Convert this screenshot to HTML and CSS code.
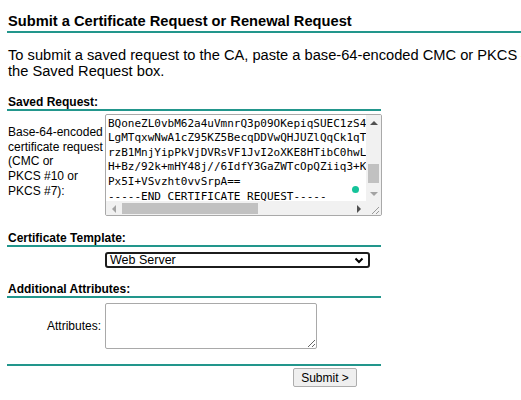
FILE: index.html
```
<!DOCTYPE html>
<html lang="en">
<head>
  <meta charset="UTF-8">
  <title>Microsoft Active Directory Certificate Services</title>
  <link rel="stylesheet" href="styles.css">
</head>
<body>
  <h1 class="title">Submit a Certificate Request or Renewal Request</h1>
  <p class="intro">To submit a saved request to the CA, paste a base-64-encoded CMC or PKCS #10 certificate request or PKCS #7 renewal request generated by an external source (such as a Web server) in<br>the Saved Request box.</p>

  <form class="req">
    <h2 class="section">Saved Request:</h2>
    <div class="row row-saved">
      <label class="lbl lbl-saved">Base-64-encoded<br>certificate request<br>(CMC or<br>PKCS #10 or<br>PKCS #7):</label>
      <div class="saved-box">
        <pre class="saved-text">Y2jBKc8n0Fq7xRzT1pWd4gUoLk9vHs3eXmNa6bQiGy5tJr2uCwEhVfZ8Do+Mlg==
BQoneZL0vbM62a4uVmnrQ3p09OKepiqSUEC1zS4tHqWm7Rk8Xa2Lb5JcVn0Pde
LgMTqxwNwA1cZ95KZ5BecqDDVwQHJUZlQqCk1qTg8sYr3Nf6Hu0Wb9EiOk2Mxa
rzB1MnjYipPkVjDVRsVF1JvI2oXKE8HTibC0hwL5nq7Gd3Ue9Ay4Rc1Zt6Qmsp
H+Bz/92k+mHY48j//6IdfY3GaZWTcOpQZiiq3+Ke2Lx7Vb0Nf5Sj8Dw1Pr4Tuo
Px5I+VSvzht0vvSrpA==
-----END CERTIFICATE REQUEST-----</pre>
        <div class="vbar">
          <div class="arrow"><span class="tri tri-up"></span></div>
          <div class="vtrack"><div class="vthumb"></div></div>
          <div class="arrow"><span class="tri tri-down"></span></div>
        </div>
        <div class="hbar">
          <div class="arrow"><span class="tri tri-left"></span></div>
          <div class="htrack"><div class="hthumb"></div></div>
          <div class="arrow"><span class="tri tri-right"></span></div>
        </div>
        <div class="corner">
          <svg width="15" height="15" viewBox="0 0 15 15">
            <line x1="13" y1="6" x2="6" y2="13" stroke="#9a9a9a" stroke-width="1"/>
            <line x1="13" y1="10" x2="10" y2="13" stroke="#9a9a9a" stroke-width="1"/>
          </svg>
        </div>
        <span class="grammar-dot"></span>
      </div>
    </div>

    <h2 class="section section-tpl">Certificate Template:</h2>
    <div class="row row-tpl">
      <span></span>
      <div class="select-box">
        <span>Web Server</span>
        <svg class="chev" width="10" height="7" viewBox="0 0 10 7">
          <polyline points="1.5,1.5 5,5 8.5,1.5" fill="none" stroke="#000" stroke-width="2"/>
        </svg>
      </div>
    </div>

    <h2 class="section section-attr">Additional Attributes:</h2>
    <div class="row row-attr">
      <label class="lbl lbl-attr" for="attrib">Attributes:</label>
      <textarea id="attrib" class="attr-box"></textarea>
    </div>

    <div class="rule"></div>
    <div class="submit-row">
      <button type="button" class="submit">Submit &gt;</button>
    </div>
  </form>
</body>
</html>
```

FILE: styles.css
```
html {
  overflow: hidden;
}
body {
  margin: 0;
  padding: 0 0 0 7px;
  font-family: "Liberation Sans", Arial, sans-serif;
  color: #000;
  background: #fff;
}
.title {
  margin: 13px 0 0;
  padding: 0 0 1px 1px;
  font-size: 14.67px;
  line-height: 17px;
  font-weight: bold;
  border-bottom: 2px solid #22968c;
}
.intro {
  margin: 14px 0 0 1px;
  font-size: 14.67px;
  line-height: 16px;
  white-space: nowrap;
}
.req {
  width: 374px;
  margin-top: 16px;
}
.section {
  margin: 0;
  padding-left: 1px;
  font-size: 12px;
  line-height: 14px;
  font-weight: bold;
  border-bottom: 2px solid #22968c;
}
.section-tpl {
  margin-top: 15px;
}
.section-attr {
  margin-top: 14px;
}
.row {
  display: grid;
  grid-template-columns: 98px auto;
}
.lbl {
  font-size: 12px;
}
.row-saved {
  margin-top: 3px;
}
.lbl-saved {
  padding: 11px 0 0 1px;
  line-height: 14.65px;
}
.saved-box {
  position: relative;
  width: 277px;
  height: 102px;
  box-sizing: border-box;
  border: 1px solid #a9a9a9;
  border-radius: 2px;
  display: grid;
  grid-template-columns: 260px 15px;
  grid-template-rows: 86px 15px;
  overflow: hidden;
}
.saved-text {
  grid-column: 1;
  grid-row: 1;
  margin: -13px 0 0;
  padding-left: 2px;
  font-family: "DejaVu Sans Mono", monospace;
  font-size: 11px;
  line-height: 14.6px;
  white-space: pre;
  overflow: hidden;
  height: 115px;
}
.vbar {
  grid-column: 2;
  grid-row: 1;
  background: #f1f1f1;
  display: flex;
  flex-direction: column;
}
.hbar {
  grid-column: 1;
  grid-row: 2;
  background: #f1f1f1;
  display: flex;
}
.corner {
  grid-column: 2;
  grid-row: 2;
  background: #f1f1f1;
}
.corner svg {
  display: block;
}
.arrow {
  width: 15px;
  height: 15px;
  display: flex;
  align-items: center;
  justify-content: center;
}
.tri {
  width: 0;
  height: 0;
}
.tri-up {
  border-left: 4px solid transparent;
  border-right: 4px solid transparent;
  border-bottom: 4px solid #505050;
}
.tri-down {
  border-left: 4px solid transparent;
  border-right: 4px solid transparent;
  border-top: 4px solid #a3a3a3;
}
.tri-left {
  border-top: 4px solid transparent;
  border-bottom: 4px solid transparent;
  border-right: 4px solid #a3a3a3;
}
.tri-right {
  border-top: 4px solid transparent;
  border-bottom: 4px solid transparent;
  border-left: 4px solid #505050;
}
.vtrack {
  flex: 1;
  padding: 34px 2px 0;
}
.vthumb {
  height: 19px;
  background: #c1c1c1;
}
.htrack {
  flex: 1;
  padding: 2px 0 0 1px;
}
.hthumb {
  width: 136px;
  height: 11px;
  background: #c1c1c1;
}
.grammar-dot {
  position: absolute;
  left: 246px;
  top: 71px;
  width: 7px;
  height: 7px;
  border-radius: 50%;
  background: #15c39a;
}
.row-tpl {
  margin-top: 5px;
}
.select-box {
  width: 265px;
  height: 16px;
  box-sizing: border-box;
  border: 2px solid #1c1c1c;
  border-radius: 3px;
  padding: 0 4px 0 3px;
  display: flex;
  align-items: center;
  justify-content: space-between;
  font-size: 12.5px;
}
.chev {
  display: block;
}
.row-attr {
  margin-top: 5px;
  align-items: center;
}
.lbl-attr {
  text-align: right;
  padding-right: 4px;
}
.attr-box {
  display: block;
  width: 212px;
  height: 46px;
  box-sizing: border-box;
  margin: 0;
  border: 1px solid #a9a9a9;
  border-radius: 2px;
}
.rule {
  margin-top: 15px;
  height: 2px;
  background: #22968c;
}
.submit-row {
  display: flex;
  justify-content: flex-end;
  padding-right: 24px;
  margin-top: 2px;
}
.submit {
  width: 64px;
  height: 19px;
  padding: 0;
  font-family: "Liberation Sans", Arial, sans-serif;
  font-size: 12px;
  color: #000;
  background: #efefef;
  border: 1px solid #adadad;
  border-radius: 2px;
}
```
